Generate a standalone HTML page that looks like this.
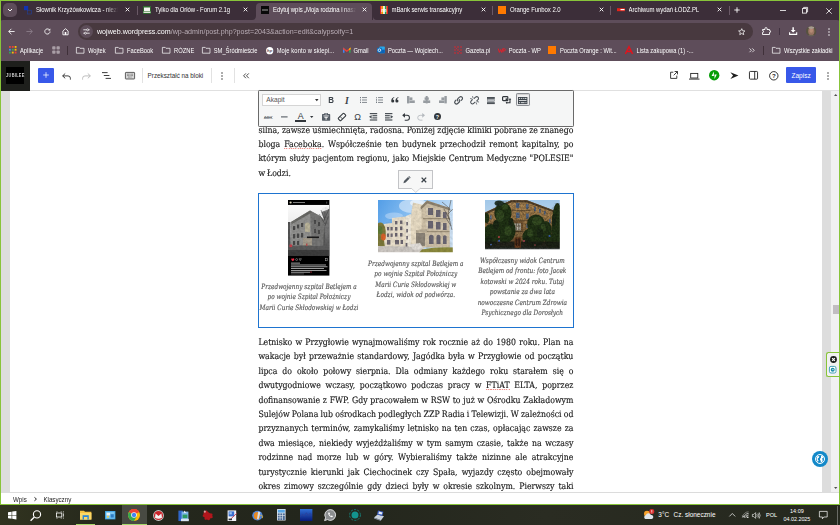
<!DOCTYPE html>
<html lang="pl">
<head>
<meta charset="utf-8">
<title>Edytuj wpis</title>
<style>
html,body{margin:0;padding:0;}
body{width:840px;height:525px;overflow:hidden;position:relative;background:#88c43a;font-family:"Liberation Sans",sans-serif;}
.abs{position:absolute;}
#win{position:absolute;left:1.3px;top:1.3px;width:837.3px;height:502.7px;background:#fff;overflow:hidden;}
#pg{position:absolute;left:-1.3px;top:-1.3px;width:840px;height:525px;}
#tabstrip{position:absolute;left:0;top:0;width:840px;height:21px;background:#3c2e39;}
#toolbar{position:absolute;left:0;top:20px;width:840px;height:41px;background:#5e4d5a;border-radius:3px 3px 0 0;}
.tabtxt{position:absolute;top:6px;font-size:6px;color:#fff;white-space:nowrap;overflow:hidden;letter-spacing:-0.07px;line-height:8px;height:8px;transform:scaleY(1.12);transform-origin:0 5.6px;}
.bm{position:absolute;top:46.6px;font-size:5.8px;color:#fff;white-space:nowrap;line-height:8px;transform:scaleY(1.12);transform-origin:0 5.6px;}
.sep{position:absolute;width:0.6px;background:#6a5966;}
svg{position:absolute;overflow:visible;}
.x{position:absolute;top:7.3px;width:5px;height:5px;}
.ln{position:absolute;font-family:"DejaVu Serif","Liberation Serif",serif;font-size:7.8px;word-spacing:-0.6px;color:#151515;-webkit-text-stroke:0.12px #151515;white-space:nowrap;transform:scaleY(1.13);transform-origin:0 9.94px;}
.sp{background:repeating-linear-gradient(90deg,#f08f89 0 0.9px,rgba(238,111,104,0.2) 0.9px 1.8px) left bottom/100% 0.9px no-repeat;}
.cp{position:absolute;font-family:"DejaVu Serif Condensed","DejaVu Serif","Liberation Serif",serif;font-style:italic;font-size:6.45px;line-height:10px;height:10px;color:#555;-webkit-text-stroke:0.12px #555;text-align:center;white-space:nowrap;transform:scaleY(1.13);transform-origin:50% 7.3px;}
.ic{color:#32373c;text-align:center;line-height:10px;white-space:nowrap;}
.tb{color:#fff;line-height:8px;white-space:nowrap;}
</style>
</head>
<body>
<div id="win"><div id="pg">
<div id="tabstrip"></div>
<div id="toolbar"></div>
<!-- tab search -->
<div class="abs" style="left:3px;top:3px;width:14px;height:14.2px;border-radius:5px;background:#5e4d5a"></div>
<svg style="left:7px;top:8px" width="6" height="4" viewBox="0 0 6 4"><path d="M1 1 L3 3 L5 1" fill="none" stroke="#fff" stroke-width="1"/></svg>
<!-- tab1 -->
<svg style="left:24px;top:6px" width="9" height="9" viewBox="0 0 9 9"><rect x="0" y="0" width="4.2" height="4.2" fill="#1233b0"/><rect x="3.4" y="4.2" width="4" height="3.8" fill="none" stroke="#21409c" stroke-width="0.6"/></svg>
<div class="tabtxt" style="left:36px;width:82px;-webkit-mask-image:linear-gradient(90deg,#000 85%,transparent)">Słownik Krzyżówkowicza - niezbędnik</div>
<svg class="x" style="left:124.5px" viewBox="0 0 5 5"><path d="M0.7 0.7 L4.3 4.3 M4.3 0.7 L0.7 4.3" stroke="#fff" stroke-width="0.9"/></svg>
<div class="sep" style="left:137px;top:6px;height:9px"></div>
<!-- tab2 -->
<svg style="left:143px;top:6px" width="8" height="8" viewBox="0 0 8 8"><rect width="8" height="8" fill="#2f6b2f"/><rect x="1" y="1.5" width="6" height="3.5" fill="#f4f4f0"/><rect x="0.5" y="5.5" width="7" height="1.5" fill="#dfe8d8"/></svg>
<div class="tabtxt" style="left:155px;width:78px;">Tylko dla Orłów - Forum 2.1g</div>
<svg class="x" style="left:243.3px" viewBox="0 0 5 5"><path d="M0.7 0.7 L4.3 4.3 M4.3 0.7 L0.7 4.3" stroke="#fff" stroke-width="0.9"/></svg>
<!-- active tab -->
<div class="abs" style="left:256.4px;top:3px;width:116.1px;height:18px;background:#5e4d5a;border-radius:4px 4px 0 0"></div>
<svg style="left:252.4px;top:16.2px" width="4" height="4" viewBox="0 0 4 4"><path d="M4 0 L4 4 L0 4 A4 4 0 0 0 4 0Z" fill="#5e4d5a"/></svg>
<svg style="left:372.5px;top:16.2px" width="4" height="4" viewBox="0 0 4 4"><path d="M0 0 L0 4 L4 4 A4 4 0 0 1 0 0Z" fill="#5e4d5a"/></svg>
<svg style="left:261px;top:6px" width="8" height="8" viewBox="0 0 8 8"><rect width="8" height="8" fill="#0a0a0a"/><rect x="1" y="3.4" width="6" height="1.2" fill="#8a8a8a"/></svg>
<div class="tabtxt" style="left:273px;width:83px;-webkit-mask-image:linear-gradient(90deg,#000 85%,transparent)">Edytuj wpis „Moja rodzina i nasze</div>
<svg class="x" style="left:361.7px" viewBox="0 0 5 5"><path d="M0.7 0.7 L4.3 4.3 M4.3 0.7 L0.7 4.3" stroke="#fff" stroke-width="0.9"/></svg>
<!-- tab4 -->
<svg style="left:379.5px;top:6px" width="8" height="8" viewBox="0 0 8 8"><rect width="8" height="8" fill="#fff"/><rect x="0" width="1.6" height="8" fill="#e2231a"/><rect x="1.6" width="1.6" height="8" fill="#f59c00"/><rect x="4.8" width="1.6" height="8" fill="#19a54a"/><rect x="6.4" width="1.6" height="8" fill="#e2231a"/><text x="4" y="6.2" font-size="6" font-weight="bold" text-anchor="middle" fill="#fff" font-family="Liberation Sans, sans-serif">m</text></svg>
<div class="tabtxt" style="left:391.5px;width:80px;">mBank serwis transakcyjny</div>
<svg class="x" style="left:480.6px" viewBox="0 0 5 5"><path d="M0.7 0.7 L4.3 4.3 M4.3 0.7 L0.7 4.3" stroke="#fff" stroke-width="0.9"/></svg>
<div class="sep" style="left:492.3px;top:6px;height:9px"></div>
<!-- tab5 -->
<div class="abs" style="left:498px;top:6px;width:8.3px;height:8.3px;background:#ff7900"></div>
<div class="tabtxt" style="left:510px;width:80px;">Orange Funbox 2.0</div>
<svg class="x" style="left:598.7px" viewBox="0 0 5 5"><path d="M0.7 0.7 L4.3 4.3 M4.3 0.7 L0.7 4.3" stroke="#fff" stroke-width="0.9"/></svg>
<div class="sep" style="left:610px;top:6px;height:9px"></div>
<!-- tab6 -->
<svg style="left:616.8px;top:6px" width="8" height="8" viewBox="0 0 8 8"><rect x="0" y="2.2" width="8" height="3" fill="#e2231a"/><rect x="3.5" y="3" width="4" height="1.2" fill="#fff"/></svg>
<div class="tabtxt" style="left:628.6px;width:80px;">Archiwum wydań ŁÓDŹ.PL</div>
<svg class="x" style="left:717px" viewBox="0 0 5 5"><path d="M0.7 0.7 L4.3 4.3 M4.3 0.7 L0.7 4.3" stroke="#fff" stroke-width="0.9"/></svg>
<div class="sep" style="left:729px;top:6px;height:9px"></div>
<svg style="left:734px;top:7px" width="6" height="6" viewBox="0 0 6 6"><path d="M3 0.3 V5.7 M0.3 3 H5.7" stroke="#fff" stroke-width="0.9"/></svg>
<!-- window controls -->
<svg style="left:779.5px;top:10px" width="6" height="1" viewBox="0 0 6 1"><path d="M0 0.5 H6" stroke="#fff" stroke-width="0.8"/></svg>
<svg style="left:802px;top:7px" width="6" height="6.5" viewBox="0 0 6 6.5"><rect x="0.4" y="1.6" width="4" height="4.5" fill="none" stroke="#fff" stroke-width="0.8"/><path d="M1.6 1.6 V0.4 H5.6 V4.9 H4.4" fill="none" stroke="#fff" stroke-width="0.8"/></svg>
<svg style="left:825.5px;top:7.5px" width="6" height="6" viewBox="0 0 6 6"><path d="M0.3 0.3 L5.7 5.7 M5.7 0.3 L0.3 5.7" stroke="#fff" stroke-width="0.8"/></svg>
<!-- toolbar nav -->
<svg style="left:7.5px;top:28px" width="7" height="7" viewBox="0 0 7 7"><path d="M6.6 3.5 H0.8 M3.4 0.8 L0.7 3.5 L3.4 6.2" fill="none" stroke="#fff" stroke-width="0.85"/></svg>
<svg style="left:25.5px;top:28px" width="7" height="7" viewBox="0 0 7 7"><path d="M0.4 3.5 H6.2 M3.6 0.8 L6.3 3.5 L3.6 6.2" fill="none" stroke="#8e7f8b" stroke-width="0.85"/></svg>
<svg style="left:43.5px;top:28px" width="7" height="7" viewBox="0 0 7 7"><path d="M6 3.5 A2.6 2.6 0 1 1 5.2 1.6" fill="none" stroke="#fff" stroke-width="0.85"/><path d="M6.3 0.4 V2.6 H4.1 Z" fill="#fff"/></svg>
<svg style="left:61.5px;top:27.8px" width="7" height="7.4" viewBox="0 0 7 7.4"><path d="M0.9 3 L3.5 0.7 L6.1 3 V6.8 H0.9 Z" fill="none" stroke="#fff" stroke-width="0.85"/><rect x="2.7" y="4" width="1.6" height="2.8" fill="#fff"/></svg>
<!-- omnibox -->
<div class="abs" style="left:78px;top:23.3px;width:675px;height:16.6px;border-radius:8.3px;background:#48393f"></div>
<div class="abs" style="left:80.3px;top:25.2px;width:13px;height:13px;border-radius:6.5px;background:#5d4d59"></div>
<svg style="left:83.3px;top:28.3px" width="7" height="7" viewBox="0 0 7 7"><path d="M0.3 1.8 H3.6 M5.6 1.8 H6.7 M0.3 5.2 H1.4 M3.4 5.2 H6.7" stroke="#fff" stroke-width="0.8"/><circle cx="4.6" cy="1.8" r="1" fill="none" stroke="#fff" stroke-width="0.7"/><circle cx="2.4" cy="5.2" r="1" fill="none" stroke="#fff" stroke-width="0.7"/></svg>
<div class="abs" style="left:97px;top:26.6px;font-size:7.1px;line-height:10px;color:#fff;white-space:nowrap;letter-spacing:0px;transform:scaleY(1.1);transform-origin:0 7px">wojweb.wordpress.com<span style="color:#b9adb6">/wp-admin/post.php?post=2043&amp;action=edit&amp;calypsoify=1</span></div>
<svg style="left:737.7px;top:27.8px" width="7.5" height="7.4" viewBox="0 0 10 10"><path d="M5 0.9 L6.25 3.7 L9.3 4 L7 6 L7.7 9 L5 7.4 L2.3 9 L3 6 L0.7 4 L3.75 3.7 Z" fill="none" stroke="#fff" stroke-width="1"/></svg>
<!-- extensions -->
<svg style="left:762px;top:27px" width="9" height="8" viewBox="0 0 9 8"><path d="M0.5 2.5 H3 V1.2 Q3 0.7 3.5 0.7 H4.5 Q5 0.7 5 1.2 V2.5 H7.5 V3.6 H8 Q8.5 3.6 8.5 4.1 V4.9 Q8.5 5.4 8 5.4 H7.5 V7.5 H0.5 V5.4 H1 Q1.5 5.4 1.5 4.9 V4.1 Q1.5 3.6 1 3.6 H0.5 Z" fill="none" stroke="#fff" stroke-width="0.9" stroke-linejoin="miter"/></svg>
<div class="sep" style="left:779.1px;top:27.6px;height:7.6px;background:#413240"></div>
<svg style="left:788.8px;top:27.2px" width="8.3" height="8.2" viewBox="0 0 8.3 8.2"><path d="M4.15 0.2 V4.6" stroke="#fff" stroke-width="1.5" fill="none"/><path d="M1.7 3 L4.15 5.5 L6.6 3Z" fill="#fff"/><path d="M0.6 5.2 V7.4 H7.7 V5.2" fill="none" stroke="#fff" stroke-width="1.1"/></svg>
<!-- avatar -->
<svg style="left:805.8px;top:26.3px" width="10.4" height="10.4" viewBox="0 0 10.4 10.4"><defs><clipPath id="av"><circle cx="5.2" cy="5.2" r="5.2"/></clipPath><filter id="avb"><feGaussianBlur stdDeviation="0.5"/></filter></defs><g clip-path="url(#av)"><rect width="10.4" height="10.4" fill="#57523f"/><g filter="url(#avb)"><ellipse cx="5.3" cy="5.2" rx="3.1" ry="3.9" fill="#9a7562"/><ellipse cx="5.3" cy="4.6" rx="1.8" ry="2.2" fill="#b48a74"/><ellipse cx="5.3" cy="1.6" rx="3" ry="1.3" fill="#a89c92"/><ellipse cx="5.2" cy="10.8" rx="5" ry="2" fill="#6a6456"/></g></g></svg>
<svg style="left:827.8px;top:27.6px" width="2" height="8" viewBox="0 0 2 8"><circle cx="1" cy="1" r="0.75" fill="#fff"/><circle cx="1" cy="4" r="0.75" fill="#fff"/><circle cx="1" cy="7" r="0.75" fill="#fff"/></svg>
<!-- bookmarks -->
<svg style="left:9px;top:46.4px" width="7.5" height="7.5" viewBox="0 0 9 9"><g><rect x="0" y="0" width="2.2" height="2.2" fill="#ea4335"/><rect x="3.4" y="0" width="2.2" height="2.2" fill="#ea4335"/><rect x="6.8" y="0" width="2.2" height="2.2" fill="#fbbc05"/><rect x="0" y="3.4" width="2.2" height="2.2" fill="#4285f4"/><rect x="3.4" y="3.4" width="2.2" height="2.2" fill="#34a853"/><rect x="6.8" y="3.4" width="2.2" height="2.2" fill="#fbbc05"/><rect x="0" y="6.8" width="2.2" height="2.2" fill="#34a853"/><rect x="3.4" y="6.8" width="2.2" height="2.2" fill="#fbbc05"/><rect x="6.8" y="6.8" width="2.2" height="2.2" fill="#ea4335"/></g></svg>
<div class="bm" style="left:20px">Aplikacje</div>
<svg style="left:52px;top:46.3px" width="8" height="8" viewBox="0 0 8 8"><rect x="0.2" y="0.2" width="3.3" height="3.3" rx="0.8" fill="#a99ea6"/><rect x="4.5" y="0.2" width="3.3" height="3.3" rx="0.8" fill="#a99ea6"/><rect x="0.2" y="4.5" width="3.3" height="3.3" rx="0.8" fill="#a99ea6"/><rect x="4.5" y="4.5" width="3.3" height="3.3" rx="0.8" fill="#a99ea6"/></svg>
<div class="sep" style="left:67.3px;top:46px;height:9px;background:#3f3039"></div>
<svg class="fd" style="left:76px;top:47px" width="8.4" height="6.6" viewBox="0 0 8.4 6.6"><path d="M0.4 0.4 H3.2 L4 1.3 H8 V6.2 H0.4 Z" fill="none" stroke="#fff" stroke-width="0.7"/></svg>
<div class="bm" style="left:88px">Wojtek</div>
<svg class="fd" style="left:115px;top:47px" width="8.4" height="6.6" viewBox="0 0 8.4 6.6"><path d="M0.4 0.4 H3.2 L4 1.3 H8 V6.2 H0.4 Z" fill="none" stroke="#fff" stroke-width="0.7"/></svg>
<div class="bm" style="left:127px">FaceBook</div>
<svg class="fd" style="left:162px;top:47px" width="8.4" height="6.6" viewBox="0 0 8.4 6.6"><path d="M0.4 0.4 H3.2 L4 1.3 H8 V6.2 H0.4 Z" fill="none" stroke="#fff" stroke-width="0.7"/></svg>
<div class="bm" style="left:174px">RÓŻNE</div>
<svg class="fd" style="left:201.6px;top:47px" width="8.4" height="6.6" viewBox="0 0 8.4 6.6"><path d="M0.4 0.4 H3.2 L4 1.3 H8 V6.2 H0.4 Z" fill="none" stroke="#fff" stroke-width="0.7"/></svg>
<div class="bm" style="left:213.7px">SM_Śródmieście</div>
<svg style="left:265.8px;top:46.6px" width="7.4" height="7.4" viewBox="0 0 8 8"><circle cx="4" cy="4" r="3.9" fill="#fff"/><text x="4" y="5.7" font-size="4.6" font-style="italic" font-weight="bold" text-anchor="middle" fill="#5e4d5a" font-family="Liberation Sans, sans-serif">hp</text></svg>
<div class="bm" style="left:276.7px;letter-spacing:0.1px">Moje konto w sklepi...</div>
<svg style="left:343px;top:47.3px" width="7.6" height="5.8" viewBox="0 0 8 6"><path d="M0 6 V0.6 L4 3.6 L8 0.6 V6" fill="none"/><path d="M0 6 V0.5 L1.6 1.7 V6Z" fill="#4285f4"/><path d="M8 6 V0.5 L6.4 1.7 V6Z" fill="#34a853"/><path d="M0 0.5 L4 3.5 L8 0.5 V2.2 L4 5.2 L0 2.2Z" fill="#ea4335"/><path d="M6.4 1.7 L8 0.5 V2.2 L6.4 3.4Z" fill="#fbbc05"/></svg>
<div class="bm" style="left:353.5px">Gmail</div>
<svg style="left:377px;top:46.3px" width="8" height="8" viewBox="0 0 8 8"><rect x="2.4" y="0.6" width="5.4" height="6.6" rx="0.6" fill="#28a8ea"/><rect x="2.4" y="3.6" width="5.4" height="3.6" fill="#0a63b8"/><rect x="0" y="1.8" width="4.8" height="4.8" rx="0.6" fill="#0f6cbd"/><circle cx="2.4" cy="4.2" r="1.3" fill="none" stroke="#fff" stroke-width="0.8"/></svg>
<div class="bm" style="left:388px">Poczta — Wojciech...</div>
<svg style="left:453.7px;top:46.2px" width="8" height="8" viewBox="0 0 8 8"><g fill="#e3232c"><circle cx="1" cy="1" r="0.8"/><circle cx="4" cy="1" r="0.8"/><circle cx="7" cy="1" r="0.8"/><circle cx="1" cy="4" r="0.8"/><circle cx="4" cy="4" r="0.8"/><circle cx="7" cy="4" r="0.8"/><circle cx="1" cy="7" r="0.8"/><circle cx="4" cy="7" r="0.8"/><circle cx="7" cy="7" r="0.8"/><circle cx="2.5" cy="2.5" r="0.6"/><circle cx="5.5" cy="5.5" r="0.6"/></g></svg>
<div class="bm" style="left:465.5px">Gazeta.pl</div>
<svg style="left:498px;top:48px" width="7.5" height="5" viewBox="0 0 7.5 5"><path d="M0.2 0.6 L1.4 4.4 L2.6 1.6 L3.6 4.4 L4.6 0.6" fill="none" stroke="#e0212b" stroke-width="1"/><path d="M5 4.4 V0.8 H6.4 A1 1 0 0 1 6.4 2.8 H5" fill="none" stroke="#e0212b" stroke-width="0.9"/></svg>
<div class="bm" style="left:508.7px">Poczta - WP</div>
<div class="abs" style="left:548px;top:46.2px;width:8.3px;height:8.3px;background:#ff7900"></div>
<div class="bm" style="left:560px">Poczta Orange : Wit...</div>
<svg style="left:624.6px;top:46px" width="8" height="8.4" viewBox="0 0 8 8.4"><path d="M0.4 8 L4 0.6 L7.6 8 M1.8 5.4 H6.6" fill="none" stroke="#e3121b" stroke-width="1.5"/></svg>
<div class="bm" style="left:636.5px">Lista zakupowa (1) -...</div>
<svg style="left:749px;top:48.2px" width="6" height="4.6" viewBox="0 0 6 4.6"><path d="M0.5 0.4 L2.4 2.3 L0.5 4.2 M3.3 0.4 L5.2 2.3 L3.3 4.2" fill="none" stroke="#fff" stroke-width="0.75"/></svg>
<div class="sep" style="left:762.8px;top:46px;height:9px;background:#3f3039"></div>
<svg class="fd" style="left:771.5px;top:47px" width="8.4" height="6.6" viewBox="0 0 8.4 6.6"><path d="M0.4 0.4 H3.2 L4 1.3 H8 V6.2 H0.4 Z" fill="none" stroke="#fff" stroke-width="0.7"/></svg>
<div class="bm" style="left:784px">Wszystkie zakładki</div>
<!-- WP header -->
<div class="abs" style="left:0;top:60.8px;width:840px;height:29.5px;background:#fff;border-bottom:0.7px solid #e0e0e0"></div>
<div class="abs" style="left:0;top:60.8px;width:30px;height:29.8px;background:#1e1f1c"></div>
<div class="abs" style="left:6px;top:66.5px;width:18px;height:17.5px;background:#000"></div>
<div class="abs" style="left:6.1px;top:71.8px;width:16px;font-size:3.9px;line-height:6px;color:#d4d4d4;font-weight:bold;letter-spacing:0.3px;text-align:center;white-space:nowrap;transform:scaleY(1.5)">JUBILEE</div>
<!-- plus -->
<div class="abs" style="left:38.1px;top:67.6px;width:15.9px;height:15.6px;border-radius:1px;background:#3858e9"></div>
<svg style="left:43.1px;top:72.4px" width="6" height="6" viewBox="0 0 7 7"><path d="M3.5 0.2 V6.8 M0.2 3.5 H6.8" stroke="#fff" stroke-width="0.85"/></svg>
<!-- undo -->
<svg style="left:61.5px;top:72.5px" width="9" height="7" viewBox="0 0 9 7"><path d="M3.2 0.5 L0.6 2.9 L3.2 5.3 M0.8 2.9 H6 A2.4 2.4 0 0 1 8.4 5.3 V6.6" fill="none" stroke="#1e1e1e" stroke-width="0.85"/></svg>
<svg style="left:81.5px;top:72.5px" width="9" height="7" viewBox="0 0 9 7"><path d="M5.8 0.5 L8.4 2.9 L5.8 5.3 M8.2 2.9 H3 A2.4 2.4 0 0 0 0.6 5.3 V6.6" fill="none" stroke="#b4b4b4" stroke-width="0.85"/></svg>
<!-- list view -->
<svg style="left:101.5px;top:72.3px" width="9" height="7" viewBox="0 0 9 7"><path d="M0 0.6 H5.6 M1.8 3.5 H7.4 M3.6 6.4 H9" stroke="#1e1e1e" stroke-width="0.85"/></svg>
<!-- classic icon -->
<svg style="left:125.2px;top:72.2px" width="10" height="7.4" viewBox="0 0 10 7.4"><rect x="0.4" y="0.4" width="9.2" height="6.6" rx="0.5" fill="#d8d8d8" stroke="#3a3a3a" stroke-width="0.8"/><path d="M2 2.2 H8 M2 3.6 H8 M3 5.1 H7" stroke="#555" stroke-width="0.7" stroke-dasharray="0.8 0.5"/></svg>
<div class="sep" style="left:142px;top:68px;height:15px;background:#e2e2e2"></div>
<div class="abs" style="left:147.6px;top:71.5px;font-size:6.3px;line-height:8px;color:#303030;white-space:nowrap">Przekształć na bloki</div>
<div class="sep" style="left:210.5px;top:68px;height:15px;background:#e2e2e2"></div>
<svg style="left:220.8px;top:71.6px" width="2" height="8" viewBox="0 0 2 8"><circle cx="1" cy="1" r="0.7" fill="#1e1e1e"/><circle cx="1" cy="4" r="0.7" fill="#1e1e1e"/><circle cx="1" cy="7" r="0.7" fill="#1e1e1e"/></svg>
<div class="sep" style="left:234px;top:68px;height:15px;background:#e2e2e2"></div>
<svg style="left:242.6px;top:72.6px" width="6.4" height="5.6" viewBox="0 0 6.4 5.6"><path d="M2.9 0.4 L0.6 2.8 L2.9 5.2 M5.8 0.4 L3.5 2.8 L5.8 5.2" fill="none" stroke="#1e1e1e" stroke-width="0.8"/></svg>
<!-- right side -->
<svg style="left:669.8px;top:71.4px" width="8" height="8" viewBox="0 0 8 8"><path d="M3.3 1.2 H0.6 V7.4 H6.8 V4.6" fill="none" stroke="#1e1e1e" stroke-width="0.85"/><path d="M4.6 0.5 H7.5 V3.4 M7.4 0.6 L3.7 4.3" fill="none" stroke="#1e1e1e" stroke-width="0.85"/></svg>
<svg style="left:688.8px;top:72.5px" width="10.5" height="6.6" viewBox="0 0 10.5 6.6"><rect x="1.7" y="0.4" width="7.1" height="4.6" fill="none" stroke="#1e1e1e" stroke-width="0.85"/><path d="M0 6.1 H10.5" stroke="#1e1e1e" stroke-width="0.9"/></svg>
<svg style="left:708.6px;top:70.3px" width="10.4" height="10.4" viewBox="0 0 10 10"><circle cx="5" cy="5" r="5" fill="#069e08"/><path d="M4.7 1.4 V5.7 H2.5 Z M5.3 8.6 V4.3 H7.5 Z" fill="#fff"/></svg>
<svg style="left:729.6px;top:72.1px" width="8.8" height="7.2" viewBox="0 0 9.6 8"><path d="M0.3 0.3 L9.3 4 L0.3 7.7 L3.3 4 Z" fill="#1e1e1e"/></svg>
<svg style="left:749.3px;top:71.2px" width="9" height="8.6" viewBox="0 0 9 8.6"><rect x="0.45" y="0.45" width="8.1" height="7.7" rx="0.8" fill="none" stroke="#1e1e1e" stroke-width="0.9"/><path d="M5.7 0.5 V8.1" stroke="#1e1e1e" stroke-width="0.9"/></svg>
<svg style="left:769px;top:70.8px" width="9.6" height="9.6" viewBox="0 0 9 9"><circle cx="4.5" cy="4.5" r="3.95" fill="none" stroke="#1e1e1e" stroke-width="0.85"/><text x="4.5" y="6.5" font-size="5.8" font-weight="bold" text-anchor="middle" fill="#1e1e1e" font-family="Liberation Sans, sans-serif">?</text></svg>
<div class="abs" style="left:786px;top:67.3px;width:30.2px;height:15.8px;border-radius:1px;background:#3858e9;color:#fff;font-size:6.5px;line-height:17.6px;text-align:center">Zapisz</div>
<svg style="left:827.2px;top:71.6px" width="2" height="8" viewBox="0 0 2 8"><circle cx="1" cy="1" r="0.7" fill="#1e1e1e"/><circle cx="1" cy="4" r="0.7" fill="#1e1e1e"/><circle cx="1" cy="7" r="0.7" fill="#1e1e1e"/></svg>
<!-- content area -->
<div class="abs" style="left:0;top:91px;width:10px;height:402px;background:#ddd"></div>
<div class="abs" style="left:821.8px;top:91px;width:9.4px;height:402px;background:#ddd"></div>
<div class="abs" style="left:831.2px;top:91px;width:9px;height:402px;background:#f1f1f1"></div>
<div class="abs" style="left:833px;top:305.4px;width:6px;height:8.6px;background:#c1bdc1"></div>
<svg style="left:834.2px;top:94.4px" width="3.4" height="2" viewBox="0 0 3.4 2"><path d="M0 2 L1.7 0 L3.4 2Z" fill="#505050"/></svg>
<svg style="left:834.2px;top:487px" width="3.4" height="2" viewBox="0 0 3.4 2"><path d="M0 0 L1.7 2 L3.4 0Z" fill="#505050"/></svg>
<div class="ln" style="left:258.4px;top:124.10px;width:315px;height:14.4px;line-height:14.4px;text-align:justify;text-align-last:justify;">silna, zawsze uśmiechnięta, radosna. Poniżej zdjęcie kliniki pobrane ze znanego</div>
<div class="ln" style="left:258.4px;top:137.70px;width:315px;height:14.4px;line-height:14.4px;text-align:justify;text-align-last:justify;">bloga <span class="sp">Faceboka</span>. Współcześnie ten budynek przechodził remont kapitalny, po</div>
<div class="ln" style="left:258.4px;top:152.10px;width:315px;height:14.4px;line-height:14.4px;text-align:justify;text-align-last:justify;">którym służy pacjentom regionu, jako Miejskie Centrum Medyczne "POLESIE"</div>
<div class="ln" style="left:258.4px;top:166.50px;width:315px;height:14.4px;line-height:14.4px;">w Łodzi.</div>
<div class="ln" style="left:258.4px;top:335.90px;width:315px;height:14.4px;line-height:14.4px;text-align:justify;text-align-last:justify;">Letnisko w Przygłowie wynajmowaliśmy rok rocznie aż do 1980 roku. Plan na</div>
<div class="ln" style="left:258.4px;top:350.30px;width:315px;height:14.4px;line-height:14.4px;text-align:justify;text-align-last:justify;">wakacje był przeważnie standardowy, Jagódka była w Przygłowie od początku</div>
<div class="ln" style="left:258.4px;top:364.70px;width:315px;height:14.4px;line-height:14.4px;text-align:justify;text-align-last:justify;">lipca do około połowy sierpnia. Dla odmiany każdego roku starałem się o</div>
<div class="ln" style="left:258.4px;top:379.10px;width:315px;height:14.4px;line-height:14.4px;text-align:justify;text-align-last:justify;">dwutygodniowe wczasy, początkowo podczas pracy w <span class="sp">FTiAT</span> ELTA, poprzez</div>
<div class="ln" style="left:258.4px;top:393.50px;width:315px;height:14.4px;line-height:14.4px;text-align:justify;text-align-last:justify;">dofinansowanie z FWP. Gdy pracowałem w RSW to już w Ośrodku Zakładowym</div>
<div class="ln" style="left:258.4px;top:407.90px;width:315px;height:14.4px;line-height:14.4px;text-align:justify;text-align-last:justify;">Sulejów Polana lub ośrodkach podległych ZZP Radia i Telewizji. W zależności od</div>
<div class="ln" style="left:258.4px;top:422.30px;width:315px;height:14.4px;line-height:14.4px;text-align:justify;text-align-last:justify;">przyznanych terminów, zamykaliśmy letnisko na ten czas, opłacając zawsze za</div>
<div class="ln" style="left:258.4px;top:436.70px;width:315px;height:14.4px;line-height:14.4px;text-align:justify;text-align-last:justify;">dwa miesiące, niekiedy wyjeżdżaliśmy w tym samym czasie, także na wczasy</div>
<div class="ln" style="left:258.4px;top:451.10px;width:315px;height:14.4px;line-height:14.4px;text-align:justify;text-align-last:justify;">rodzinne nad morze lub w góry. Wybieraliśmy także nizinne ale atrakcyjne</div>
<div class="ln" style="left:258.4px;top:465.50px;width:315px;height:14.4px;line-height:14.4px;text-align:justify;text-align-last:justify;">turystycznie kierunki jak Ciechocinek czy Spała, wyjazdy często obejmowały</div>
<div class="ln" style="left:258.4px;top:479.90px;width:315px;height:14.4px;line-height:14.4px;text-align:justify;text-align-last:justify;">okres zimowy szczególnie gdy dzieci były w okresie szkolnym. Pierwszy taki</div>
<div class="abs" style="left:257.9px;top:193.2px;width:314.4px;height:132.8px;border:0.9px solid #1e74d0"></div>
<div class="cp" style="left:249.0px;top:281.60px;width:120px">Przedwojenny szpital Betlejem a</div>
<div class="cp" style="left:249.0px;top:292.08px;width:120px">po wojnie Szpital Położniczy</div>
<div class="cp" style="left:249.0px;top:302.56px;width:120px">Marii Curie Skłodowskiej w Łodzi</div>
<div class="cp" style="left:355.8px;top:258.60px;width:120px">Przedwojenny szpital Betlejem a</div>
<div class="cp" style="left:355.8px;top:269.08px;width:120px">po wojnie Szpital Położniczy</div>
<div class="cp" style="left:355.8px;top:279.56px;width:120px">Marii Curie Skłodowskiej w</div>
<div class="cp" style="left:355.8px;top:290.04px;width:120px">Łodzi, widok od podwórza.</div>
<div class="cp" style="left:462.3px;top:255.80px;width:120px">Współczesny widok Centrum</div>
<div class="cp" style="left:462.3px;top:266.28px;width:120px">Betlejem od frontu: foto Jacek</div>
<div class="cp" style="left:462.3px;top:276.76px;width:120px">kotowski w 2024 roku. Tutaj</div>
<div class="cp" style="left:462.3px;top:287.24px;width:120px">powstanie za dwa lata</div>
<div class="cp" style="left:462.3px;top:297.72px;width:120px">nowoczesne Centrum Zdrowia</div>
<div class="cp" style="left:462.3px;top:308.20px;width:120px">Psychicznego dla Dorosłych</div>
<!--IMAGES-->
<!--TOOLBAR-->
<!--SIDE-->
<!-- image 1: instagram screenshot -->
<svg style="left:288px;top:200px" width="41.4" height="75.6" viewBox="0 0 41.4 75.6">
<defs>
<linearGradient id="g1" x1="0" y1="0" x2="0" y2="1"><stop offset="0" stop-color="#fafafa"/><stop offset="0.55" stop-color="#e6e6e6"/><stop offset="0.8" stop-color="#8a8a8a"/><stop offset="1" stop-color="#444"/></linearGradient>
<filter id="b1" x="-5%" y="-5%" width="110%" height="110%"><feGaussianBlur stdDeviation="0.45"/></filter>
<clipPath id="c1"><rect x="0" y="4.8" width="41.4" height="51.2"/></clipPath><clipPath id="c1n"><path d="M0 22 L3 22 L22 10.5 L32 16 L34 8 L41.4 6 L41.4 56 L0 56Z"/></clipPath><filter id="n1" x="0" y="0" width="100%" height="100%"><feTurbulence type="fractalNoise" baseFrequency="0.4" numOctaves="2" seed="11"/><feColorMatrix type="matrix" values="0 0 0 0 0  0 0 0 0 0  0 0 0 0 0  1.6 0 0 0 -0.5"/></filter>
</defs>
<rect width="41.4" height="75.6" fill="#000"/>
<circle cx="2.6" cy="2.5" r="1.1" fill="#d8d2b8"/><rect x="5" y="2" width="12" height="0.9" fill="#8c8c8c"/><rect x="38.6" y="1.6" width="0.5" height="2" fill="#999"/>
<g clip-path="url(#c1)"><g filter="url(#b1)">
<rect x="0" y="4.8" width="41.4" height="51.2" fill="url(#g1)"/>
<path d="M3 22 L22 10.5 L32 16 L36 20 L36 45 L3 46 Z" fill="#929290"/>
<path d="M22 10.5 L32 16 L36 20 L36 45 L24 45 Z" fill="#767674"/>
<path d="M3 22 L22 10.5 L24 12.5 L4 24Z" fill="#6a6a66"/>
<path d="M17 24 q2.5 -3 5 0 v8 h-5z" fill="#b9b39a"/>
<g fill="#4c4c4c"><rect x="5" y="26" width="2.2" height="4"/><rect x="9" y="24.5" width="2.2" height="4"/><rect x="13" y="23" width="2.2" height="4"/><rect x="5" y="34" width="2.2" height="4.5"/><rect x="9" y="33.5" width="2.2" height="4.5"/><rect x="13" y="33" width="2.2" height="4.5"/><rect x="26" y="20" width="2" height="4"/><rect x="30" y="22" width="2" height="4"/><rect x="26" y="29" width="2" height="4"/><rect x="30" y="30" width="2" height="4"/><rect x="5" y="41" width="2.2" height="4"/><rect x="9" y="41" width="2.2" height="4"/></g>
<rect x="15" y="38" width="9" height="8" fill="#a59c8c"/><rect x="19" y="36.5" width="12" height="1.6" fill="#1f1f1f"/>
<path d="M33.5 12 L36.5 22 L35.5 46 L41.4 46 L41.4 9 Z" fill="#4c4c4c" opacity="0.75"/>
<path d="M36 46 L37 12 M37 20 L33 10 M37 18 L41 9 M37 26 L40.5 16 M37 24 L31 14" stroke="#3b3b3b" stroke-width="0.5" fill="none"/>
<rect x="0" y="22" width="2.5" height="24" fill="#555"/>
<rect x="0" y="45.5" width="41.4" height="4.5" fill="#5c5c5c"/><rect x="0" y="50" width="41.4" height="6" fill="#3c3c3c"/>
<rect x="1.5" y="44.5" width="2.6" height="2.6" fill="#c4404c"/><rect x="18" y="43.5" width="1.5" height="2.5" fill="#b05050"/>
</g><g clip-path="url(#c1n)"><rect y="4.8" width="41.4" height="51.2" fill="#222" filter="url(#n1)" opacity="0.14"/></g></g>
<path d="M3.2 59 q0.9 -1.3 1.6 0 q0.7 -1.3 1.6 0 q0 1.3 -1.6 2.3 q-1.6 -1 -1.6 -2.3z" fill="#ed2a45"/>
<circle cx="8.6" cy="59.6" r="1" fill="none" stroke="#bbb" stroke-width="0.45"/><path d="M11.2 58.7 L13.4 58.7 L12.2 60.8Z" fill="none" stroke="#bbb" stroke-width="0.45"/><rect x="37.6" y="58.6" width="1.6" height="2.2" fill="none" stroke="#bbb" stroke-width="0.45"/>
<g fill="#c4c4c4"><rect x="3" y="62.7" width="9" height="0.8"/><rect x="3" y="64.6" width="35" height="0.8"/><rect x="3" y="66.4" width="36.5" height="0.8"/><rect x="3" y="68.2" width="33" height="0.8"/><rect x="3" y="70" width="35.5" height="0.8"/><rect x="3" y="71.8" width="19" height="0.8"/><rect x="3" y="73.6" width="13" height="0.7" fill="#666"/></g>
<rect x="22.6" y="71.4" width="0.9" height="1.4" fill="#d03a4a"/>
</svg>
<!-- image 2: courtyard view -->
<svg style="left:378.1px;top:200.4px" width="74.8" height="52.3" viewBox="0 0 74.8 52.3">
<defs>
<linearGradient id="g2" x1="0" y1="0" x2="1" y2="0.4"><stop offset="0" stop-color="#4f9be6"/><stop offset="0.45" stop-color="#86bdf0"/><stop offset="1" stop-color="#cfe3f6"/></linearGradient>
<filter id="b2" x="-5%" y="-5%" width="110%" height="110%"><feGaussianBlur stdDeviation="0.5"/></filter>
<clipPath id="c2"><rect width="74.8" height="52.3"/></clipPath><clipPath id="c2n"><path d="M0 24 L5.7 24 L14 18 L32 15 L35 2.5 L43.5 5 L49 0.5 L71.5 8 L74.8 10 L74.8 52.3 L0 52.3Z"/></clipPath><filter id="n2" x="0" y="0" width="100%" height="100%"><feTurbulence type="fractalNoise" baseFrequency="0.35" numOctaves="2" seed="3"/><feColorMatrix type="matrix" values="0 0 0 0 0  0 0 0 0 0  0 0 0 0 0  1.6 0 0 0 -0.5"/></filter>
</defs>
<g clip-path="url(#c2)"><g filter="url(#b2)">
<rect x="-2" y="-2" width="79" height="57" fill="url(#g2)"/>
<ellipse cx="34" cy="6" rx="13" ry="7" fill="#e8f1fb" opacity="0.55"/><ellipse cx="40" cy="3" rx="8" ry="4" fill="#f4f8fd" opacity="0.7"/><ellipse cx="16" cy="16" rx="9" ry="3.4" fill="#cfe2f8" opacity="0.45"/>
<path d="M5.7 24 L14 23 L14 18 L32 16 L33 47 L5.7 47Z" fill="#e9dfcb"/>
<path d="M32.5 19 L35 2.5 L46 5 L46 48 L32.5 47Z" fill="#e8dcc4"/>
<path d="M28 16 L33 14 L33 47 L28 47Z" fill="#f1eadb"/>
<path d="M43.5 6 L49 0.5 L71.5 8 L71.8 47.6 L43.5 47.6Z" fill="#cfc1a8"/>
<path d="M42.5 7 L49 0.5 L71.5 8 L72.5 10.5 L49.5 3.5 L43 9.5Z" fill="#8f836f"/>
<g fill="#6b6672"><rect x="50" y="8" width="5" height="7"/><rect x="58" y="10" width="4.5" height="7"/><rect x="65" y="12" width="3.6" height="6.5"/><rect x="50" y="21" width="5" height="7.5"/><rect x="58" y="22" width="4.5" height="7.5"/><rect x="65" y="23" width="3.6" height="7"/><path d="M51 44 v-8 q2.3 -2.6 4.6 0 v8z"/><path d="M58.5 44 v-8 q2 -2.4 4 0 v8z"/><path d="M65 44 v-7.6 q1.8 -2.2 3.6 0 v7.6z"/></g>
<path d="M45 18.6 H71.5 M45 31.6 H71.5" stroke="#9c8f78" stroke-width="1.3"/><path d="M49 8 v7 M57 10 v7 M64 12 v6.5 M49 21 v7.5 M57 22 v7.5 M64 23 v7" stroke="#e9e2d2" stroke-width="0.7"/>
<path d="M38 30 L49 29 L49 32 L38 33Z" fill="#b9ad97"/><rect x="38" y="33" width="9" height="13" fill="#8c8478"/>
<g fill="#6c6670"><rect x="17" y="21" width="2.4" height="3.4"/><rect x="22" y="20.5" width="2.4" height="3.4"/><rect x="17" y="27" width="2.4" height="3.6"/><rect x="22" y="26.5" width="2.4" height="3.6"/><rect x="17" y="33" width="2.4" height="3.6"/><rect x="22" y="33" width="2.4" height="3.6"/><rect x="9" y="27" width="2.2" height="3.4"/><rect x="12.5" y="27" width="2.2" height="3.4"/><rect x="9" y="33.5" width="2.2" height="3.4"/><rect x="12.5" y="33.5" width="2.2" height="3.4"/><rect x="17" y="40" width="4" height="4.4"/><rect x="22.6" y="40" width="2.4" height="4"/><rect x="9" y="40" width="3.4" height="4.6"/><rect x="28.3" y="22" width="1.6" height="3.4"/><rect x="28.3" y="29" width="1.6" height="3.4"/><rect x="28.3" y="36" width="1.6" height="3.4"/><rect x="27.6" y="43" width="1.8" height="4"/></g>
<path d="M-1 48 L-1 24 Q4 20 7 27 Q9 34 6 40 L7 48Z" fill="#7d7a3a"/><ellipse cx="5.4" cy="37" rx="2.4" ry="3.6" fill="#d9632a"/><ellipse cx="2" cy="30" rx="2.5" ry="4" fill="#5f7a35"/>
<path d="M-1 46 L30 46.5 L46 47.5 L46 54 L-1 54Z" fill="#cdc8c3"/>
<path d="M31 44.5 L42 43 L46 49 L36 50Z" fill="#e3dfda"/>
<path d="M44 49.5 Q58 46.5 76 47.5 L76 54 L40 54Z" fill="#8c8a3c"/>
<path d="M73 0 L70 14 L74 30 M70 14 L76 8 M72 20 L66 9 M71 8 L64 2 M73 26 L68 18" stroke="#4c4640" stroke-width="0.7" fill="none" opacity="0.8"/>
</g>
<g clip-path="url(#c2n)"><rect width="74.8" height="52.3" fill="#3a3020" filter="url(#n2)" opacity="0.13"/></g>
</g>
</svg>
<!-- image 3: front view -->
<svg style="left:485.1px;top:200.4px" width="74.8" height="49.3" viewBox="0 0 74.8 49.3">
<defs>
<linearGradient id="g3" x1="0" y1="0" x2="0" y2="1"><stop offset="0" stop-color="#9fc6e8"/><stop offset="1" stop-color="#e3edf4"/></linearGradient>
<linearGradient id="g3b" x1="0" y1="0" x2="0" y2="1"><stop offset="0" stop-color="#b28c58"/><stop offset="0.55" stop-color="#957142"/><stop offset="1" stop-color="#4e3c26"/></linearGradient>
<filter id="b3" x="-5%" y="-5%" width="110%" height="110%"><feGaussianBlur stdDeviation="0.5"/></filter>
<filter id="n3" x="0" y="0" width="100%" height="100%"><feTurbulence type="fractalNoise" baseFrequency="0.55" numOctaves="2" seed="7"/><feColorMatrix type="matrix" values="0 0 0 0 0  0 0 0 0 0  0 0 0 0 0  1.6 0 0 0 -0.45"/></filter>
<clipPath id="c3"><rect width="74.8" height="49.3"/></clipPath><clipPath id="c3n"><path d="M0 13 L10 8 L12 1 L18 1 L26 0.3 L42 0.3 L66 9 L70 3 L74.8 3 L74.8 49.3 L0 49.3Z"/></clipPath>
</defs>
<g clip-path="url(#c3)"><g filter="url(#b3)">
<rect x="-2" y="-2" width="79" height="54" fill="url(#g3)"/>
<path d="M-1 13 L26 0.3 L42 0.3 L73 12 L76 13 L76 52 L-1 52Z" fill="url(#g3b)"/>
<path d="M-1 13 L26 0.3 L42 0.3 L73 12 L73 13.8 L42 2.4 L26 2.4 L-1 15.2Z" fill="#54422b"/>
<path d="M26 10.6 H46 M26 20.4 H46 M0 24 L26 20.4 M46 20.4 L74 24 M0 35 L26 33 M46 33 L74 35" stroke="#6c5232" stroke-width="0.9" fill="none"/>
<g fill="#556a88"><rect x="31" y="2.8" width="3.4" height="5.2"/><rect x="41" y="4" width="2.6" height="4.8"/><rect x="31" y="12.5" width="3.6" height="5.6"/><rect x="41" y="13.5" width="2.8" height="5.2"/><rect x="22.6" y="15" width="2.4" height="5"/><rect x="49" y="7" width="2" height="4.2"/><rect x="54" y="9" width="1.8" height="3.8"/><rect x="59" y="11" width="1.6" height="3.6"/><rect x="1.4" y="17" width="1.6" height="4"/><rect x="5" y="15.4" width="1.6" height="4"/><rect x="1.4" y="27" width="1.6" height="4.4"/><rect x="5" y="26.4" width="1.6" height="4.4"/><rect x="64" y="19" width="1.6" height="4.4"/><rect x="64" y="28" width="1.6" height="5"/><rect x="41.4" y="24" width="2.4" height="4"/><rect x="22.8" y="25" width="2.2" height="4"/></g>
<rect x="27.5" y="21" width="10.6" height="11" fill="#745733"/><rect x="29" y="23.4" width="7" height="7" fill="#c4c0b2"/><path d="M31.3 23.4 v7 M33.7 23.4 v7 M29 26 h7" stroke="#4e3c26" stroke-width="0.55"/>
<rect x="26.6" y="31.4" width="12" height="4.4" fill="#86673f"/><rect x="26.6" y="31" width="12" height="0.9" fill="#4e3c26"/>
<g fill="#243519"><ellipse cx="18" cy="13" rx="8.6" ry="10.6"/><ellipse cx="20" cy="30" rx="10.6" ry="13"/><ellipse cx="6" cy="35" rx="8" ry="11"/><ellipse cx="1.6" cy="18" rx="2.6" ry="5"/><ellipse cx="51" cy="24" rx="9" ry="9.6"/><ellipse cx="49" cy="37" rx="11.6" ry="10"/><ellipse cx="61" cy="31" rx="6" ry="10"/><ellipse cx="72.4" cy="27" rx="5.6" ry="24"/><ellipse cx="66" cy="41" rx="6" ry="7"/></g>
<g fill="#344d24"><ellipse cx="15" cy="16" rx="4" ry="6"/><ellipse cx="52" cy="21" rx="5" ry="4.6"/><ellipse cx="23" cy="31" rx="3.6" ry="5"/><ellipse cx="45" cy="33" rx="3" ry="4"/><ellipse cx="20" cy="7" rx="3" ry="3"/><ellipse cx="58" cy="28" rx="2.6" ry="4"/></g>
<g fill="#1b2915"><ellipse cx="11" cy="25" rx="3" ry="5"/><ellipse cx="26" cy="22" rx="2.4" ry="4"/><ellipse cx="55" cy="33" rx="3.4" ry="4.6"/><ellipse cx="42" cy="40" rx="3" ry="4"/><ellipse cx="69" cy="20" rx="2" ry="6"/><ellipse cx="4" cy="40" rx="3.6" ry="4"/></g>
<ellipse cx="14" cy="3.2" rx="4.4" ry="2.8" fill="#26382d"/>
<rect x="-1" y="41.6" width="77" height="10" fill="#1c2118" opacity="0.88"/>
<rect x="29.6" y="37.4" width="6.4" height="12" fill="#6b3b1e"/><rect x="30.6" y="38.6" width="1.8" height="7" fill="#3a2316"/><rect x="33.2" y="38.6" width="1.8" height="7" fill="#3a2316"/>
<circle cx="14" cy="37" r="1.1" fill="#c24a4a"/><circle cx="14" cy="40.8" r="1.1" fill="#3c63b8"/><circle cx="64.5" cy="36" r="1.1" fill="#3c63b8"/><circle cx="39" cy="41" r="1" fill="#b84a5a"/><circle cx="6" cy="44.6" r="0.9" fill="#4a6ab0"/><circle cx="50" cy="45" r="0.8" fill="#b05050"/>
<rect x="-1" y="47.8" width="77" height="3" fill="#3b413d"/>
</g>
<g clip-path="url(#c3n)"><rect x="0" y="0" width="74.8" height="49.3" fill="#0a0f08" filter="url(#n3)" opacity="0.42"/></g>
</g>
</svg>
<!-- TinyMCE toolbar -->
<div class="abs" style="left:258.2px;top:90.1px;width:313.8px;height:35.1px;background:#f5f6f6;border:0.7px solid #6a6a6a;border-radius:1.2px"></div>
<div class="abs" style="left:262px;top:93.6px;width:59.3px;height:12px;background:#fff;border:0.4px solid #d5d5d5;box-sizing:border-box"></div>
<div class="abs" style="left:266.3px;top:95.8px;font-size:6.6px;line-height:8px;color:#555;white-space:nowrap">Akapit</div>
<svg style="left:314.5px;top:99px" width="3.6" height="2.2" viewBox="0 0 3.6 2.2"><path d="M0 0 H3.6 L1.8 2.2Z" fill="#333"/></svg>
<!-- row 1 icons; center y=100.3 -->
<div class="abs ic" style="left:326px;top:95.1px;width:10px;font-weight:bold;font-size:9.2px;transform:scaleX(0.86);color:#3c434a">B</div>
<div class="abs ic" style="left:341.8px;top:95.6px;width:10px;font-weight:bold;font-style:italic;font-size:9.6px;color:#3c434a;font-family:'Liberation Serif',serif">I</div>
<svg style="left:359.6px;top:97.3px" width="7" height="6" viewBox="0 0 7 6"><g fill="#555d66"><rect x="0" y="0.2" width="1" height="1"/><rect x="0" y="2.5" width="1" height="1"/><rect x="0" y="4.8" width="1" height="1"/><rect x="2" y="0.35" width="5" height="0.7"/><rect x="2" y="2.65" width="5" height="0.7"/><rect x="2" y="4.95" width="5" height="0.7"/></g></svg>
<svg style="left:375.6px;top:97.3px" width="7" height="6" viewBox="0 0 7 6"><g fill="#555d66"><rect x="0.3" y="0" width="0.6" height="1.4"/><rect x="0.1" y="2.3" width="0.9" height="1.3"/><rect x="0.1" y="4.6" width="0.9" height="1.3"/><rect x="2" y="0.35" width="5" height="0.7"/><rect x="2" y="2.65" width="5" height="0.7"/><rect x="2" y="4.95" width="5" height="0.7"/></g></svg>
<svg style="left:390.6px;top:97.4px" width="7.6" height="5.6" viewBox="0 0 7.6 5.6"><path d="M3.2 0 Q0.2 1.2 0.2 3.9 A1.55 1.55 0 1 0 1.7 2.4 Q1.7 1.3 3.2 0.7Z M7.4 0 Q4.4 1.2 4.4 3.9 A1.55 1.55 0 1 0 5.9 2.4 Q5.9 1.3 7.4 0.7Z" fill="#32373c"/></svg>
<svg style="left:406.8px;top:96.3px" width="7.8" height="7.4" viewBox="0 0 7.8 7.4"><g fill="#979ca1"><rect x="0" y="0" width="2.4" height="7.4"/><rect x="2.4" y="1.4" width="3" height="2.6"/><rect x="2.4" y="4.4" width="5.4" height="2.6"/></g></svg>
<svg style="left:423.2px;top:96.3px" width="7.4" height="7.4" viewBox="0 0 7.4 7.4"><g fill="#979ca1"><rect x="2.7" y="0" width="2" height="7.4"/><rect x="1.6" y="1.4" width="4.2" height="2.4"/><rect x="0.2" y="4.4" width="7" height="2.6"/></g></svg>
<svg style="left:438.7px;top:96.3px" width="7.8" height="7.4" viewBox="0 0 7.8 7.4"><g fill="#979ca1"><rect x="5.4" y="0" width="2.4" height="7.4"/><rect x="2.4" y="1.4" width="3" height="2.6"/><rect x="0" y="4.4" width="5.4" height="2.6"/></g></svg>
<svg style="left:454.4px;top:95.8px" width="9.2" height="8.6" viewBox="0 0 9.2 8.6"><g fill="none" stroke="#4b5157" stroke-width="1.15" stroke-linecap="round"><path d="M3.9 5 A1.8 1.8 0 0 1 3.9 2.6 L5.5 1.1 A1.75 1.75 0 0 1 8 3.6 L7.2 4.4"/><path d="M5.3 3.6 A1.8 1.8 0 0 1 5.3 6 L3.7 7.5 A1.75 1.75 0 0 1 1.2 5 L2 4.2"/></g></svg>
<svg style="left:470.4px;top:95.8px" width="9.2" height="8.6" viewBox="0 0 9.2 8.6"><g fill="none" stroke="#4b5157" stroke-width="1.05" stroke-linecap="round"><path d="M4.2 2.4 L5.5 1.2 A1.75 1.75 0 0 1 8 3.7 L6.8 4.9"/><path d="M5 6.2 L3.7 7.4 A1.75 1.75 0 0 1 1.2 4.9 L2.4 3.7"/><path d="M0.5 2.6 L1.9 3 M2.6 0.5 L3 1.9 M8.7 6 L7.3 5.6 M6.6 8.1 L6.2 6.7" stroke-width="0.75"/></g></svg>
<svg style="left:486.8px;top:96.5px" width="7.8" height="7.1" viewBox="0 0 7.8 7.1"><rect x="0" y="0" width="7.8" height="1.9" fill="#4b5157"/><rect x="0.4" y="2.5" width="7" height="2.1" fill="#b9bdc1" stroke="#6d7278" stroke-width="0.5"/><rect x="0" y="5.2" width="7.8" height="1.9" fill="#4b5157"/></svg>
<svg style="left:502px;top:96px" width="9.6" height="8.4" viewBox="0 0 9.6 8.4"><rect x="0.6" y="0.6" width="5.2" height="4" rx="0.7" fill="none" stroke="#32373c" stroke-width="1.2"/><rect x="3.6" y="2.4" width="1.8" height="1.8" fill="#32373c"/><path d="M8 2.8 V6.8 H4.2" fill="none" stroke="#32373c" stroke-width="1.1"/><path d="M6.7 3.8 L8 2.2 L9.3 3.8Z M5.2 5.5 L3.6 6.8 L5.2 8.1Z" fill="#32373c"/></svg>
<div class="abs" style="left:516.3px;top:93.4px;width:13.4px;height:13px;border:0.5px solid #8c8f94;border-radius:1.2px;box-sizing:border-box;background:#f0f0f1;box-shadow:inset 0 0.5px 1px rgba(0,0,0,0.25)"></div>
<svg style="left:518.2px;top:96.5px" width="9.4" height="7.1" viewBox="0 0 9.4 7.1"><rect width="9.4" height="7.1" fill="#3c434a"/><g fill="#cfd2d4"><rect x="0.9" y="0.9" width="1.1" height="1.1"/><rect x="2.8" y="0.9" width="1.1" height="1.1"/><rect x="4.7" y="0.9" width="1.1" height="1.1"/><rect x="6.6" y="0.9" width="1.9" height="1.1"/><rect x="0.9" y="3" width="7.6" height="1"/><rect x="0.9" y="5.1" width="1.1" height="1.1"/><rect x="2.8" y="5.1" width="3.8" height="1.1"/><rect x="7.4" y="5.1" width="1.1" height="1.1"/></g></svg>
<!-- row 2; center y=116.9 -->
<div class="abs ic" style="left:262.7px;top:113.5px;width:11px;font-size:4.3px;font-weight:bold;line-height:7px;color:#7e8388;letter-spacing:-0.1px">ABC</div><div class="abs" style="left:264px;top:116.8px;width:8.4px;height:0.35px;background:#7e8388"></div>
<svg style="left:281px;top:116.1px" width="6.6" height="1.7" viewBox="0 0 6.6 1.7"><rect width="6.6" height="1.7" fill="#8c9196"/></svg>
<div class="abs ic" style="left:295.6px;top:111.9px;width:10px;font-size:8.8px;line-height:9px;">A</div>
<div class="abs" style="left:295.2px;top:120.3px;width:10.4px;height:1.3px;background:#32373c"></div>
<svg style="left:310.2px;top:116px" width="3.4" height="2" viewBox="0 0 3.4 2"><path d="M0 0 H3.4 L1.7 2Z" fill="#32373c"/></svg>
<svg style="left:321.7px;top:113.1px" width="8.2" height="7.8" viewBox="0 0 7 8" preserveAspectRatio="none"><rect x="0" y="1" width="7" height="7" rx="0.5" fill="#555d66"/><rect x="2" y="0" width="3" height="2" fill="#555d66"/><rect x="2.8" y="0.6" width="1.4" height="0.8" fill="#f5f5f5"/><rect x="1.2" y="2.6" width="4.6" height="0.8" fill="#f5f5f5"/><path d="M2 4.4 H5 M3.5 4.4 V7" stroke="#f5f5f5" stroke-width="0.9"/></svg>
<svg style="left:337.6px;top:113px" width="8" height="8" viewBox="0 0 8 8"><g transform="rotate(45 4 4)"><rect x="2.2" y="0" width="3.6" height="8" rx="0.9" fill="none" stroke="#32373c" stroke-width="1.05"/><path d="M2.2 5 H5.8" stroke="#32373c" stroke-width="0.8"/></g></svg>
<div class="abs ic" style="left:352.6px;top:113.2px;width:10px;font-size:9px;line-height:9px;color:#3c434a;">Ω</div>
<svg style="left:369.2px;top:113px" width="8.2" height="7.6" viewBox="0 0 8.2 7.6"><g fill="#4b5157"><rect x="0.8" y="0" width="7.4" height="1.2"/><rect x="3.4" y="2.1" width="4.8" height="1.2"/><rect x="3.4" y="4.3" width="4.8" height="1.2"/><rect x="0.8" y="6.4" width="7.4" height="1.2"/><path d="M2.6 1.9 V5.7 L0 3.8Z"/></g></svg>
<svg style="left:385.4px;top:113px" width="8.2" height="7.6" viewBox="0 0 8.2 7.6"><g fill="#4b5157"><rect x="0" y="0" width="7.4" height="1.2"/><rect x="0" y="2.1" width="4.8" height="1.2"/><rect x="0" y="4.3" width="4.8" height="1.2"/><rect x="0" y="6.4" width="7.4" height="1.2"/><path d="M5.6 1.9 V5.7 L8.2 3.8Z"/></g></svg>
<svg style="left:401.7px;top:112.9px" width="8.2" height="8" viewBox="0 0 7.4 7.6"><path d="M1.4 2.2 H4.6 A2.3 2.3 0 0 1 4.6 6.8 H2.4" fill="none" stroke="#32373c" stroke-width="1"/><path d="M2.6 0 V4.4 L0 2.2Z" fill="#32373c"/></svg>
<svg style="left:417.4px;top:112.9px" width="8.2" height="8" viewBox="0 0 7.4 7.6"><path d="M6 2.2 H2.8 A2.3 2.3 0 0 0 2.8 6.8 H5" fill="none" stroke="#b4b9be" stroke-width="0.8"/><path d="M4.8 0 V4.4 L7.4 2.2Z" fill="#b4b9be"/></svg>
<svg style="left:434.2px;top:113.4px" width="7" height="7" viewBox="0 0 7 7"><circle cx="3.5" cy="3.5" r="3.5" fill="#32373c"/><text x="3.5" y="5.5" font-size="5.4" font-weight="bold" text-anchor="middle" fill="#f5f5f5" font-family="Liberation Sans, sans-serif">?</text></svg>
<!-- inline image toolbar -->
<div class="abs" style="left:398.1px;top:170.3px;width:35.2px;height:18.8px;background:#f7f7f7;border:0.6px solid #c3c4c7;box-sizing:border-box"></div>
<svg style="left:410.8px;top:188.4px" width="9.6" height="5" viewBox="0 0 9.6 5"><path d="M0 0 L4.8 4.4 L9.6 0" fill="#f7f7f7" stroke="#b9babd" stroke-width="0.6"/><rect x="0.5" y="-0.6" width="8.6" height="0.9" fill="#f7f7f7"/></svg>
<svg style="left:403.4px;top:175.6px" width="7.6" height="7.6" viewBox="0 0 7 7"><path d="M0.4 6.6 L0.9 4.6 L4.6 0.9 L6.1 2.4 L2.4 6.1 Z" fill="#50575e"/><path d="M5 0.5 L5.6 0 L7 1.4 L6.5 2Z" fill="#50575e"/></svg>
<svg style="left:420.5px;top:176.8px" width="5.8" height="5.8" viewBox="0 0 5.6 5.6"><path d="M0.6 0.6 L5 5 M5 0.6 L0.6 5" stroke="#3c434a" stroke-width="1.3"/></svg>
<!-- side widgets -->
<div class="abs" style="left:826px;top:352px;width:14px;height:25px;background:#f1f1f1;border:0.8px solid #88c43a;border-right:none;border-radius:2.5px 0 0 2.5px;box-sizing:border-box"></div>
<svg style="left:829.6px;top:356px" width="7" height="7" viewBox="0 0 7 7"><circle cx="3.5" cy="3.5" r="3.4" fill="#1d1d1d"/><path d="M2.1 2.1 L4.9 4.9 M4.9 2.1 L2.1 4.9" stroke="#fff" stroke-width="1.1"/></svg>
<svg style="left:829.4px;top:366.4px" width="7.4" height="7.4" viewBox="0 0 7.4 7.4"><rect x="0.4" y="0.4" width="6.6" height="6.6" rx="1.6" fill="#fff" stroke="#1b8ca8" stroke-width="0.8"/><circle cx="3.7" cy="3.7" r="2" fill="#1b8ca8"/><path d="M3 3.6 H4.8" stroke="#fff" stroke-width="0.6"/></svg>
<svg style="left:812.1px;top:450.9px" width="16" height="16" viewBox="0 0 16 16"><circle cx="8" cy="8" r="8" fill="#1389c9"/><circle cx="8" cy="8" r="4.5" fill="#1389c9" stroke="#fff" stroke-width="1"/><path d="M5 5.4 Q6.6 4.4 7.4 5.6 Q7 7 5.8 7.4 Q5.6 8.8 6.6 9.6 Q6.4 10.8 5.4 10.6 Q3.8 8.6 5 5.4Z M9 4.2 Q11.6 5 11.8 7.2 Q10.6 6.8 10 7.8 Q11 8.8 10.6 10.2 Q9.6 11.6 8.6 11.4 Q9.2 10 8.4 9.2 Q7.6 8.6 8.2 7.6 Q9.4 7 9 5.8Z" fill="#fff"/></svg>
<!-- footer breadcrumb -->
<div class="abs" style="left:0;top:492.3px;width:840px;height:13px;background:#fff;border-top:0.7px solid #dcdcdc"></div>
<div class="abs" style="left:13px;top:495.8px;font-size:6.2px;line-height:8px;color:#1e1e1e;white-space:nowrap;transform:scaleY(1.2);transform-origin:0 6.2px">Wpis</div>
<svg style="left:33.6px;top:497.2px" width="3" height="4.2" viewBox="0 0 2.6 3.6"><path d="M0.4 0.3 L2.1 1.8 L0.4 3.3" fill="none" stroke="#1e1e1e" stroke-width="0.8"/></svg>
<div class="abs" style="left:43.4px;top:495.8px;font-size:6.2px;line-height:8px;color:#1e1e1e;white-space:nowrap;transform:scaleY(1.2);transform-origin:0 6.2px">Klasyczny</div>
</div></div>
<!-- taskbar -->
<div class="abs" style="left:0;top:505.4px;width:840px;height:19.6px;background:linear-gradient(90deg,#31331f,#24271c 14%,#23261c 40%,#2a2c22 65%,#25281e)"></div>
<div class="abs" style="left:122px;top:505.4px;width:24.5px;height:19.6px;background:#484a42"></div>
<div class="abs" style="left:75.5px;top:523.8px;width:19.5px;height:1.2px;background:#a5d86a"></div>
<div class="abs" style="left:122px;top:523.8px;width:24.5px;height:1.2px;background:#a5d86a"></div>
<!-- windows logo -->
<svg style="left:8px;top:511px" width="8.4" height="8.4" viewBox="0 0 8.4 8.4"><path d="M0 1.2 L3.6 0.7 V3.9 H0Z M4.2 0.6 L8.4 0 V3.9 H4.2Z M0 4.5 H3.6 V7.7 L0 7.2Z M4.2 4.5 H8.4 V8.4 L4.2 7.8Z" fill="#fff"/></svg>
<!-- search -->
<svg style="left:30px;top:509.6px" width="11.4" height="11.4" viewBox="0 0 11.4 11.4"><circle cx="7" cy="4.4" r="3.6" fill="none" stroke="#fff" stroke-width="1.1"/><path d="M4.4 7 L0.6 10.8" stroke="#fff" stroke-width="1.3"/></svg>
<!-- task view -->
<svg style="left:56px;top:511px" width="8.6" height="8" viewBox="0 0 8.6 8"><rect x="0.4" y="2" width="5.4" height="4" fill="none" stroke="#fff" stroke-width="0.8"/><path d="M1 0.4 V1.2 M5.2 0.4 V1.2 M1 6.8 V7.6 M5.2 6.8 V7.6 M7.4 0.4 V1.4 M7.4 2.4 V5.6 M7.4 6.6 V7.6" stroke="#fff" stroke-width="0.8"/></svg>
<!-- explorer -->
<svg style="left:80px;top:510.4px" width="11.4" height="9.6" viewBox="0 0 11.4 9.6"><path d="M0 0.8 H4 L5 1.8 H11.4 V9.6 H0Z" fill="#f6c342"/><rect x="0" y="3" width="11.4" height="6.6" fill="#fbd867"/><rect x="2.6" y="5.2" width="6.2" height="4.4" fill="#2b87d8"/><rect x="4" y="7" width="3.4" height="2.6" fill="#fbd867"/></svg>
<!-- photos-ish -->
<svg style="left:105px;top:511px" width="10.4" height="8.4" viewBox="0 0 10.4 8.4"><rect width="10.4" height="8.4" fill="#3aa0e0"/><rect x="0.8" y="0.8" width="8.8" height="6.8" fill="#7cc7f2"/><rect x="1.6" y="1.8" width="3.4" height="2.6" fill="#e9f4fb"/><rect x="5.6" y="3.2" width="3.2" height="3.4" fill="#2f7fc4"/><circle cx="3" cy="5.8" r="1" fill="#f2d24a"/></svg>
<!-- chrome -->
<svg style="left:128.2px;top:509.4px" width="12" height="12" viewBox="0 0 12 12"><circle cx="6" cy="6" r="6" fill="#fbbc05"/><path d="M6 6 L0.8 3 A6 6 0 0 1 11.2 3Z" fill="#ea4335"/><path d="M6 6 L0.8 3 A6 6 0 0 0 6 12 L8.7 7.4Z" fill="#34a853"/><path d="M0.8 3 A6 6 0 0 1 11.2 3 H6Z" fill="#ea4335"/><circle cx="6" cy="6" r="2.8" fill="#fff"/><circle cx="6" cy="6" r="2.2" fill="#4285f4"/></svg>
<!-- red round app -->
<svg style="left:153.4px;top:510px" width="11" height="11" viewBox="0 0 11 11"><circle cx="5.5" cy="5.5" r="5.4" fill="#c8c8c8"/><circle cx="5.5" cy="5.5" r="4.6" fill="#c9252b"/><path d="M2 7.8 L2.6 3.6 L5.5 6 L8.4 3.6 L9 7.8 Q5.5 9.8 2 7.8Z" fill="#f4f4f4"/></svg>
<!-- blue doc app -->
<svg style="left:178px;top:509.6px" width="11" height="11.4" viewBox="0 0 11 11.4"><rect x="0.4" y="0.6" width="4.4" height="10.4" fill="#2f66c9"/><rect x="3.6" y="1.6" width="6.8" height="9" fill="#7fb5e6"/><rect x="4.6" y="4.6" width="4.8" height="3.6" fill="#2c9a63"/><rect x="3" y="8.8" width="7.8" height="2.4" fill="#d9e6f2"/><path d="M6 0.4 L8.6 3 L6 3Z" fill="#dfe9f5"/></svg>
<!-- red puzzle -->
<svg style="left:201.4px;top:508.6px" width="13.2" height="13.2" viewBox="0 0 11 11"><path d="M3.2 2 Q4.6 0.2 5.6 2.2 L7.4 3.6 Q10.4 3.6 9.4 5.6 Q10.6 8 8 7.6 Q7.4 10.4 5 8.8 Q2.4 9.4 3 6.8 Q0.2 6.4 2 4.6 Q1.6 2.6 3.2 2Z" fill="#b2161c"/><circle cx="3.2" cy="2.2" r="0.9" fill="#d9a0a0"/></svg>
<!-- paint/doc -->
<svg style="left:227.4px;top:509.6px" width="11" height="11.4" viewBox="0 0 11 11.4"><rect x="0.6" y="0.4" width="8.6" height="10.6" fill="#f2f4f7"/><rect x="1.6" y="1.4" width="5.6" height="5" fill="#3b6fd0"/><rect x="2.4" y="2.2" width="2.4" height="2.2" fill="#9cc3ee"/><path d="M3.4 9.4 L9.8 3.2" stroke="#c2344a" stroke-width="0.9"/><rect x="1.6" y="8.6" width="3.4" height="1.6" fill="#2a2f3a"/></svg>
<!-- orange/blue app -->
<svg style="left:251.6px;top:510px" width="11.6" height="11" viewBox="0 0 11.6 11"><ellipse cx="5.4" cy="5.6" rx="5.2" ry="4.8" fill="#4f86d8"/><ellipse cx="5" cy="5.8" rx="3.2" ry="3.8" fill="#e88a24"/><path d="M6.2 1.6 L8.4 2.2 L6.6 9.6 L5 9Z" fill="#d8dde6"/><path d="M8.4 5.4 Q11.6 5 10.2 8.2" fill="none" stroke="#e0b23c" stroke-width="0.9"/></svg>
<!-- calculator -->
<svg style="left:277.2px;top:509.4px" width="8.6" height="11.6" viewBox="0 0 8.6 11.6"><rect width="8.6" height="11.6" rx="0.5" fill="#dfe6ee"/><rect x="0.8" y="0.8" width="7" height="2.8" fill="#57a7e6"/><g fill="#4a6a94"><rect x="0.8" y="4.4" width="1.9" height="1.8"/><rect x="3.35" y="4.4" width="1.9" height="1.8"/><rect x="5.9" y="4.4" width="1.9" height="1.8"/><rect x="0.8" y="6.8" width="1.9" height="1.8"/><rect x="3.35" y="6.8" width="1.9" height="1.8"/><rect x="5.9" y="6.8" width="1.9" height="4.2"/><rect x="0.8" y="9.2" width="1.9" height="1.8"/><rect x="3.35" y="9.2" width="1.9" height="1.8"/></g></svg>
<!-- blue chart app -->
<svg style="left:300px;top:509px" width="12.4" height="12" viewBox="0 0 12.4 12"><defs><linearGradient id="tg1" x1="0" y1="0" x2="0" y2="1"><stop offset="0" stop-color="#2f6fd6"/><stop offset="1" stop-color="#071a78"/></linearGradient></defs><rect width="12.4" height="12" fill="url(#tg1)"/><path d="M0.6 7.6 L2.6 5.4 L4.2 7.2 L6.4 3.8 L8.2 6.6 L10 4.4 L11.8 6.8" fill="none" stroke="#2a3f9a" stroke-width="0.9"/></svg>
<!-- whatsapp -->
<svg style="left:324.4px;top:509px" width="12.4" height="12.4" viewBox="0 0 12.4 12.4"><path d="M6.4 0.6 A5.4 5.4 0 1 1 3.4 10.6 L0.6 11.6 L1.6 8.8 A5.4 5.4 0 0 1 6.4 0.6Z" fill="#8a8d8f" stroke="#e9eaeb" stroke-width="0.9"/><path d="M4.4 3.6 Q3.6 5 5.2 6.8 Q7 8.6 8.6 8 L8.8 7 L7.6 6.4 L7 7 Q5.8 6.6 5.4 5.4 L6 4.8 L5.4 3.6Z" fill="#fff"/></svg>
<!-- teal circle -->
<svg style="left:349px;top:509.2px" width="12" height="12" viewBox="0 0 12 12"><circle cx="6" cy="6" r="5.4" fill="none" stroke="#139c95" stroke-width="0.7" stroke-dasharray="2.2 1.2"/><circle cx="6" cy="6" r="3.5" fill="#13948e"/></svg>
<!-- scanner/printer -->
<svg style="left:373px;top:509.6px" width="12" height="11" viewBox="0 0 12 11"><path d="M1 7.6 L4.6 4.6 L11 6.2 L8 10.2Z" fill="#c9d1dc"/><path d="M1 7.6 L8 10.2 L8 11 L1 8.6Z" fill="#8c96a6"/><path d="M5 0.6 L10.4 1.8 L9.2 6 L4 4.6Z" fill="#3f62c4"/><path d="M6 1.6 L9.4 2.4 L8.8 4.6 L5.4 3.8Z" fill="#e6ecf6"/></svg>
<!-- tray -->
<svg style="left:642.6px;top:509.4px" width="11.6" height="11" viewBox="0 0 11.6 11"><circle cx="4" cy="4.8" r="3" fill="#f6a12c"/><path d="M2.4 10 A2 2 0 0 1 2.8 6.2 A2.8 2.8 0 0 1 8 6 A2 2 0 0 1 8.6 10Z" fill="#dfe6ee"/><circle cx="8.8" cy="2.6" r="2.5" fill="#d92e2e"/><rect x="8.5" y="1" width="0.7" height="2.2" fill="#fff"/><rect x="8.5" y="3.6" width="0.7" height="0.7" fill="#fff"/></svg>
<div class="abs tb" style="left:658.3px;top:511px;font-size:6.45px;">3°C</div>
<div class="abs tb" style="left:673.6px;top:511px;font-size:6.45px;">Cz. słonecznie</div>
<svg style="left:729.2px;top:513.4px" width="6.6" height="3.8" viewBox="0 0 6.6 3.8"><path d="M0.4 3.4 L3.3 0.5 L6.2 3.4" fill="none" stroke="#fff" stroke-width="0.7"/></svg>
<svg style="left:741.6px;top:511.4px" width="7" height="7.2" viewBox="0 0 7 7.2"><path d="M0.6 6.8 A6 6 0 0 1 6.6 0.8" fill="none" stroke="#9a9c97" stroke-width="0.7"/><path d="M2.2 6.8 A4.4 4.4 0 0 1 6.6 2.4 M3.8 6.8 A2.8 2.8 0 0 1 6.6 4 " fill="none" stroke="#fff" stroke-width="0.7"/><circle cx="5.8" cy="6.2" r="0.8" fill="#fff"/><path d="M0.4 4.6 L2 6.2 M2 4.6 L0.4 6.2" stroke="#fff" stroke-width="0.5"/></svg>
<svg style="left:752.4px;top:511.6px" width="8.6" height="7" viewBox="0 0 8.6 7"><path d="M0.4 2.4 H1.8 L3.6 0.6 V6.4 L1.8 4.6 H0.4Z" fill="none" stroke="#fff" stroke-width="0.6"/><path d="M4.8 2.2 Q5.6 3.5 4.8 4.8 M6 1.2 Q7.4 3.5 6 5.8 M7.2 0.4 Q9 3.5 7.2 6.6" fill="none" stroke="#fff" stroke-width="0.6"/></svg>
<div class="abs tb" style="left:766px;top:511.4px;font-size:5.6px;">POL</div>
<div class="abs tb" style="left:779.4px;top:506.6px;width:35px;text-align:center;font-size:5.5px;">14:09</div>
<div class="abs tb" style="left:779.4px;top:515px;width:35px;text-align:center;font-size:5.4px;">04.02.2025</div>
<svg style="left:818.6px;top:511px" width="8.6" height="8.4" viewBox="0 0 8.6 8.4"><path d="M0.4 0.4 H8.2 V6 H4.8 L3.4 7.8 V6 H0.4Z" fill="none" stroke="#fff" stroke-width="0.7"/></svg>
<div class="abs" style="left:837.4px;top:506px;width:0.5px;height:19px;background:#6a6c66"></div>
</body>
</html>
